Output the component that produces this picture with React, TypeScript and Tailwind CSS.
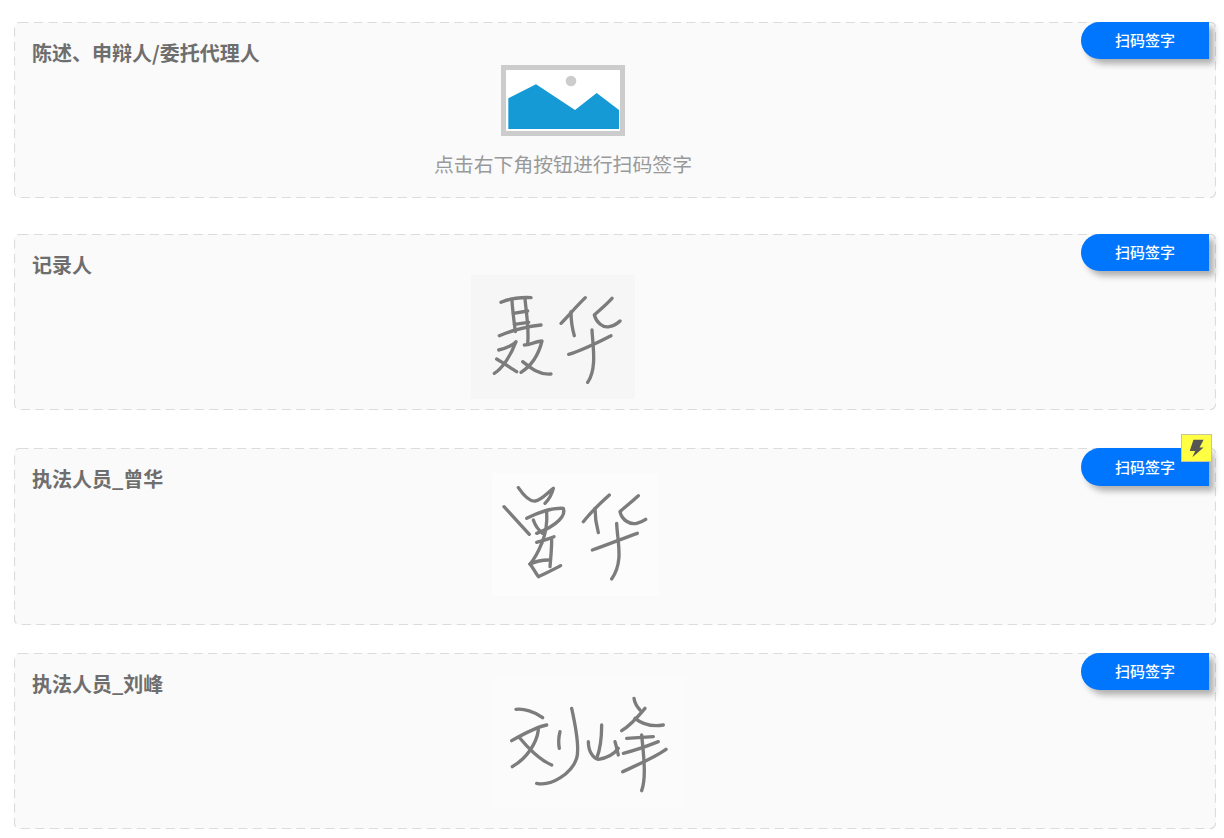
import type { ReactNode } from "react";

const font = { fontFamily: '"Noto Sans CJK SC", "Noto Sans", sans-serif' };

function Card({
  label,
  className,
  bolt,
  children,
}: {
  label: string;
  className: string;
  bolt?: boolean;
  children: ReactNode;
}) {
  return (
    <section
      className={`relative flex w-[1202px] rounded-md border border-transparent bg-[#fafafa] pl-[17px] ${className}`}
    >
      <svg className="pointer-events-none absolute -inset-px h-[calc(100%+2px)] w-[calc(100%+2px)]" fill="none">
        <rect x="0.5" y="0.5" rx="5" className="h-[calc(100%-1px)] w-[calc(100%-1px)]" stroke="#dcdcdc" strokeWidth="1.2" strokeDasharray="9 5.5" />
      </svg>
      <h2 className="relative mt-[19px] h-[22px] w-[240px] shrink-0 text-[20px] leading-[22px] font-bold whitespace-nowrap text-[#6e6e6e]">
        {label}
      </h2>
      {children}
      <button
        className={`absolute -top-px right-[6px] flex w-[128px] items-center justify-center rounded-l-[19px] bg-[#0076ff] text-[15px] font-medium text-white shadow-[5px_5px_6px_rgba(0,0,0,0.3)] ${bolt ? "h-[38px]" : "h-[37px]"}`}
      >
        扫码签字
        {bolt && (
          <span className="absolute -top-[14px] -right-[3px] flex h-[28px] w-[31px] items-center justify-center border-[1.5px] border-[#c4c4a0] bg-[#ffff44]">
            <svg viewBox="388 43 44 56" className="h-[19px] w-[15px]">
              <path d="M401 45H431L419 68H431L398 97L406 78H390Z" fill="#555555" />
            </svg>
          </span>
        )}
      </button>
    </section>
  );
}

function Signature({
  box,
  viewBox,
  paths,
}: {
  box: string;
  viewBox: string;
  paths: string[];
}) {
  return (
    <div className={`shrink-0 ${box}`}>
      <svg viewBox={viewBox} className="h-full w-full blur-[0.7px]" fill="none" stroke="#7c7c7c" strokeWidth="10" strokeLinecap="round" strokeLinejoin="round">
        {paths.map((d) => (
          <path key={d} d={d} />
        ))}
      </svg>
    </div>
  );
}

const nie = [
  "M125 112C150 100 190 96 215 98",
  "M158 108C160 140 165 175 168 200",
  "M197 100C200 140 210 190 205 238",
  "M162 145L205 138",
  "M165 178L208 172",
  "M120 212C160 195 200 185 245 180",
  "M118 255C140 250 165 238 170 230C155 270 130 310 105 325",
  "M112 282C135 295 155 310 172 320",
  "M195 240C210 240 235 228 248 228C240 260 220 300 185 322",
  "M190 290C215 310 240 330 275 327",
  "M378 98C350 125 325 155 305 175",
  "M335 140C335 170 340 195 345 212",
  "M458 100C435 125 415 140 405 150C410 170 430 190 450 185C465 182 475 175 482 168",
  "M328 268C370 255 420 230 455 212",
  "M398 195C400 240 414 310 385 352",
];

const zeng = [
  "M115 68C130 90 148 110 165 108C185 105 200 85 220 70C215 90 205 105 195 115",
  "M72 125L148 208",
  "M140 160C170 145 215 128 250 130C258 150 235 180 170 205",
  "M160 165C165 180 175 195 188 205",
  "M200 140C202 170 198 205 185 235",
  "M170 232C190 226 205 222 222 215",
  "M185 235C175 260 165 280 150 297",
  "M215 225C215 255 212 280 210 305",
  "M150 297C170 288 185 285 205 285",
  "M150 297C160 310 168 325 175 335C195 325 220 315 242 302",
  "M388 90C360 115 330 145 310 170",
  "M345 130C345 160 350 185 355 203",
  "M475 92C450 115 430 130 420 140C425 165 450 180 470 175C480 172 490 168 497 163",
  "M337 255C380 240 430 220 472 205",
  "M410 175C412 230 432 290 395 342",
];

const liu = [
  "M108 118C130 115 165 125 188 143",
  "M95 212C125 195 175 170 200 165",
  "M120 205C140 230 180 270 215 285",
  "M175 180C170 220 140 265 97 290",
  "M240 185C235 205 235 220 238 235",
  "M275 115C285 160 300 230 290 265C275 310 215 350 170 340",
  "M365 165C365 200 360 240 350 265",
  "M325 215C325 245 340 265 355 268C380 265 400 255 415 235",
  "M405 215C410 230 412 245 415 255",
  "M462 85C465 105 475 115 480 120",
  "M495 115C470 145 445 170 425 182",
  "M465 145C490 165 520 170 550 165",
  "M440 205L520 200",
  "M430 250C470 240 510 225 535 215",
  "M428 305C470 285 520 265 558 238",
  "M485 195C490 250 500 320 485 362",
];

export default function App() {
  return (
    <main className="min-h-[838px] bg-white px-[14px] pt-[22px]" style={font}>
      <Card label="陈述、申辩人/委托代理人" className="h-[176px]">
        <div className="relative mt-[42px] ml-[162px] flex w-[258px] flex-col items-center">
          <svg viewBox="243 30 372 213" className="h-[71px] w-[124px] shrink-0">
            <rect x="243" y="30" width="372" height="213" fill="#cccccc" />
            <rect x="258" y="45" width="342" height="183" fill="#ffffff" />
            <path d="M265 130L348 88L465 165L530 114L597 165V222H265Z" fill="#159ad6" />
            <circle cx="453" cy="78" r="16" fill="#cccccc" />
          </svg>
          <p className="mt-[14px] text-[19.85px] leading-[28px] whitespace-nowrap text-[#999999]">
            点击右下角按钮进行扫码签字
          </p>
        </div>
      </Card>

      <Card label="记录人" className="mt-[36px] h-[176px]">
        <div className="relative mt-[40px] ml-[199px]">
          <Signature box="h-[124px] w-[164px] bg-[#f6f6f6]" viewBox="35 30 492 372" paths={nie} />
        </div>
      </Card>

      <Card label="执法人员_曾华" bolt className="mt-[38px] h-[177px]">
        <div className="relative mt-[24px] ml-[220px]">
          <Signature box="h-[123px] w-[167px] bg-[#fcfcfc]" viewBox="36 24 501 369" paths={zeng} />
        </div>
      </Card>

      <Card label="执法人员_刘峰" className="mt-[28px] h-[176px]">
        <div className="relative mt-[23px] ml-[220px]">
          <Signature box="h-[131px] w-[193px] bg-[#fbfbfb]" viewBox="36 21 579 393" paths={liu} />
        </div>
      </Card>
    </main>
  );
}
